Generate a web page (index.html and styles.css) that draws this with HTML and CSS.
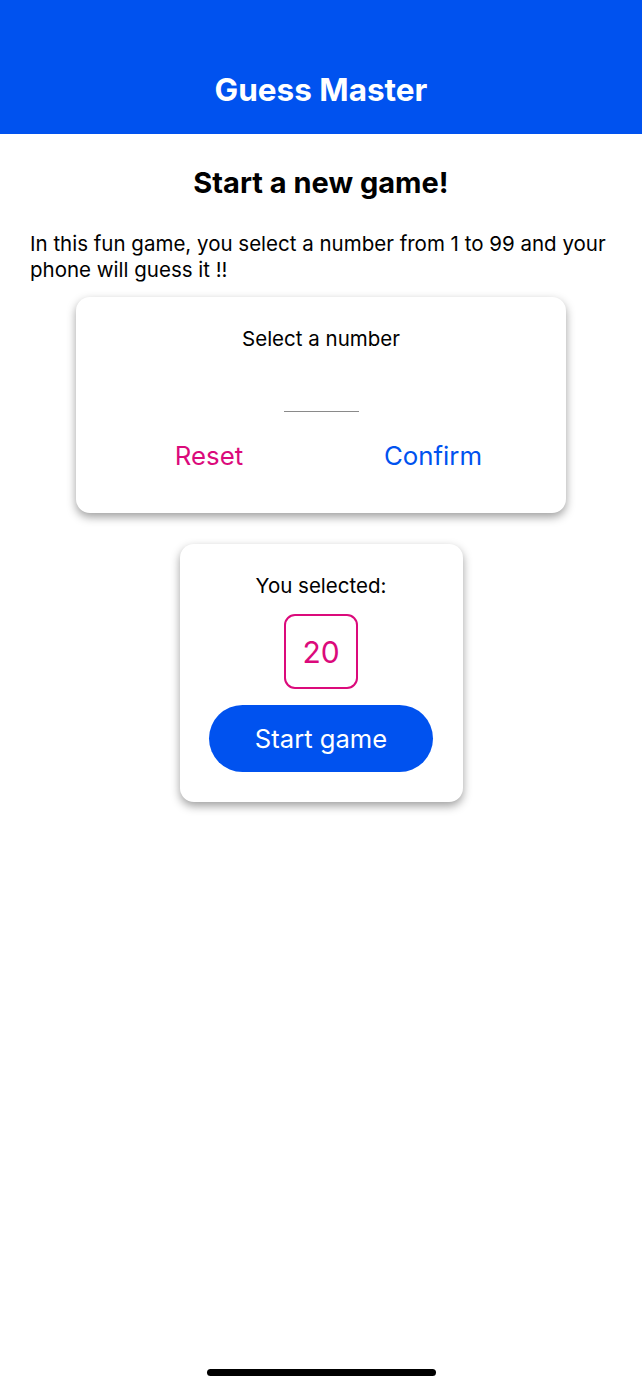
FILE: index.html
```html
<!DOCTYPE html>
<html lang="en">
<head>
<meta charset="utf-8">
<title>Guess Master</title>
<link rel="stylesheet" href="styles.css">
</head>
<body>
<header class="app-header">
  <h1 class="app-title">Guess Master</h1>
</header>
<main class="screen">
  <h2 class="screen-title">Start a new game!</h2>
  <p class="intro">In this fun game, you select a number from 1 to 99 and your phone will guess it !!</p>
  <section class="card input-card">
    <div class="card-label">Select a number</div>
    <div class="number-input"></div>
    <div class="actions">
      <button class="text-btn reset">Reset</button>
      <button class="text-btn confirm">Confirm</button>
    </div>
  </section>
  <section class="card summary-card">
    <div class="card-label">You selected:</div>
    <div class="chosen">20</div>
    <button class="start-btn">Start game</button>
  </section>
</main>
<div class="home-indicator"></div>
</body>
</html>
```
FILE: styles.css
```css
html, body {
  margin: 0;
  padding: 0;
  background: #ffffff;
}
body {
  font-family: Inter, "Noto Sans", "Liberation Sans", sans-serif;
  color: #000;
  width: 642px;
  height: 1389px;
  position: relative;
  overflow: hidden;
}
.app-header {
  height: 134px;
  background: #0052EF;
  display: flex;
  align-items: flex-end;
  justify-content: center;
  box-sizing: border-box;
  padding-bottom: 25px;
}
.app-title {
  margin: 0;
  color: #fff;
  font-size: 31.5px;
  line-height: 38px;
  font-weight: 700;
}
.screen {
  display: flex;
  flex-direction: column;
  align-items: center;
}
.screen-title {
  margin: 32px 0 0;
  font-size: 29px;
  line-height: 34px;
  font-weight: 700;
}
.intro {
  margin: 31px 0 0;
  padding: 0 30px;
  align-self: stretch;
  font-size: 20.5px;
  line-height: 26px;
}
.card {
  background: #fff;
  border-radius: 14px;
  box-shadow: 0 4px 10px rgba(0, 0, 0, 0.38);
  box-sizing: border-box;
  display: flex;
  flex-direction: column;
  align-items: center;
}
.input-card {
  margin-top: 14px;
  width: 490px;
  height: 216px;
  padding: 30px 21px 0;
}
.card-label {
  font-size: 20.5px;
  line-height: 24px;
}
.number-input {
  margin-top: 20px;
  width: 75px;
  height: 40px;
  border-bottom: 1px solid #8a8a8a;
}
.actions {
  margin-top: 29px;
  align-self: stretch;
  display: flex;
}
.text-btn {
  flex: 1;
  background: none;
  border: 0;
  padding: 0;
  font-family: inherit;
  font-size: 25.8px;
  line-height: 30px;
}
.reset { color: #DB0A7B; }
.confirm { color: #0052EF; }
.summary-card {
  margin-top: 31px;
  width: 283px;
  height: 258px;
  padding-top: 30px;
}
.chosen {
  margin-top: 16px;
  width: 74px;
  height: 75px;
  box-sizing: border-box;
  border: 2.5px solid #DB0A7B;
  border-radius: 11px;
  color: #DB0A7B;
  font-size: 30px;
  display: flex;
  align-items: center;
  justify-content: center;
}
.start-btn {
  margin-top: 16px;
  width: 224px;
  height: 67px;
  border: 0;
  border-radius: 34px;
  background: #0052EF;
  color: #fff;
  font-family: inherit;
  font-size: 25.6px;
}
.home-indicator {
  position: absolute;
  left: 207px;
  bottom: 13px;
  width: 229px;
  height: 7px;
  border-radius: 4px;
  background: #000;
}
```
